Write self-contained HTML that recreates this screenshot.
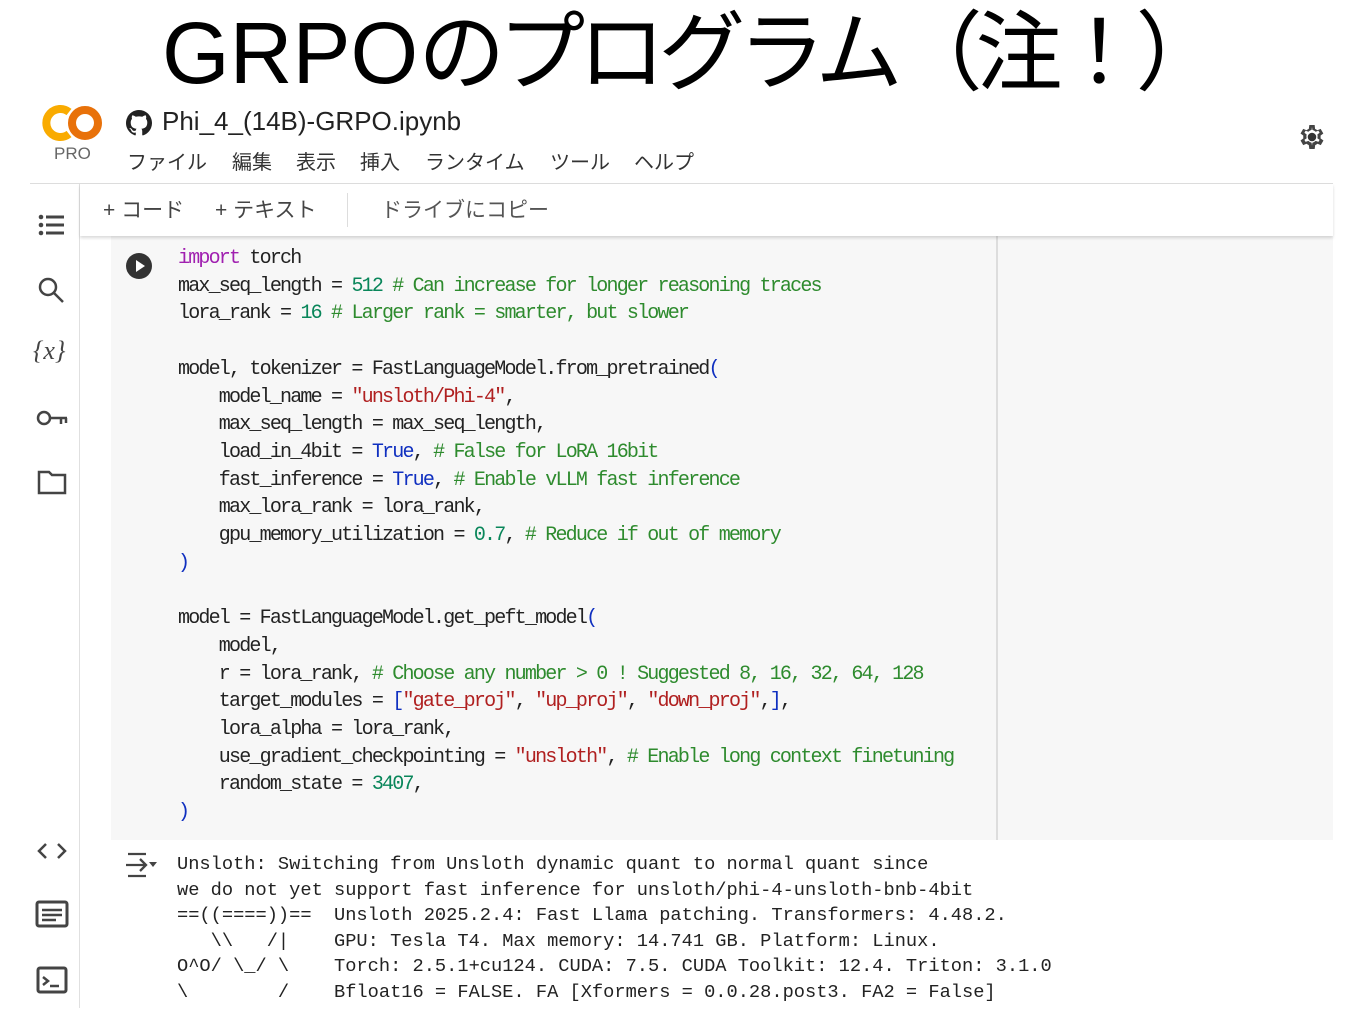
<!DOCTYPE html>
<html><head><meta charset="utf-8"><style>
*{margin:0;padding:0;box-sizing:border-box}
body{width:1371px;height:1025px;background:#fff;position:relative;overflow:hidden;font-family:"Liberation Sans","Noto Sans CJK JP",sans-serif;color:#222}
.abs{position:absolute}
.title{left:162px;top:4px;font-size:87px;line-height:100px;white-space:nowrap;color:#000}
.title span{letter-spacing:-7px}
.code{left:178px;top:245px;font-family:"Liberation Mono",monospace;font-size:20px;letter-spacing:-1.8px;line-height:27.7px;white-space:pre;color:#222}
.k{color:#a020b0}.n{color:#09865a}.c{color:#2e8b2e}.s{color:#b02020}.b{color:#1030c0}
.out{left:177px;top:852px;font-family:"Liberation Mono",monospace;font-size:18.7px;line-height:25.5px;white-space:pre;color:#222}
.menu{top:146px;font-size:20px;color:#333}
.ic{stroke:#444;fill:none;stroke-width:2.5}
</style></head><body>
<div class="abs title">GRPO<span>のプログラム（注！）</span></div>

<svg class="abs" style="left:42px;top:104px" width="62" height="38" viewBox="0 0 62 38">
<path d="M27 8 A14 14 0 1 0 27 30" stroke="#f9ab00" stroke-width="8" fill="none"/>
<circle cx="43" cy="19" r="13" stroke="#e8710a" stroke-width="8" fill="none"/>
</svg>
<div class="abs" style="left:54px;top:144px;font-size:17px;color:#666">PRO</div>

<svg class="abs" style="left:126px;top:110px" width="26" height="26" viewBox="0 0 16 16"><path fill="#222" d="M8 0C3.58 0 0 3.580 0 8c0 3.54 2.29 6.53 5.47 7.59.4.07.55-.17.55-.38v-1.330c-2.23.48-2.7-1.070-2.7-1.07-.36-.92-.89-1.17-.89-1.17-.73-.5.05-.49.05-.49.8.06 1.23.83 1.23.83.72 1.22 1.870.87 2.33.66.07-.52.28-.87.5-1.07-1.78-.2-3.64-.89-3.640-3.95 0-.87.31-1.59.82-2.15-.08-.2-.36-1.02.08-2.12 0 0 .67-.21 2.2.82a7.6 7.6 0 0 1 4 0c1.53-1.04 2.2-.82 2.2-.82.44 1.1.16 1.92.08 2.12.51.56.82 1.27.82 2.15 0 3.07-1.87 3.75-3.65 3.95.29.25.54.73.54 1.48v2.2c0 .21.15.46.55.38A8 8 0 0 0 16 8c0-4.42-3.58-8-8-8z"/></svg>
<div class="abs" style="left:162px;top:106px;font-size:26px;color:#222">Phi_4_(14B)-GRPO.ipynb</div>
<div class="abs menu" style="left:127px">ファイル</div>
<div class="abs menu" style="left:232px">編集</div>
<div class="abs menu" style="left:296px">表示</div>
<div class="abs menu" style="left:360px">挿入</div>
<div class="abs menu" style="left:425px">ランタイム</div>
<div class="abs menu" style="left:550px">ツール</div>
<div class="abs menu" style="left:634px">ヘルプ</div>

<svg class="abs" style="left:1296px;top:121px" width="32" height="32" viewBox="0 0 24 24"><path fill="#444" d="M19.4 13a7.5 7.5 0 0 0 0-2l2.1-1.6-2-3.5-2.5 1a7 7 0 0 0-1.7-1L15 3h-4l-.4 2.9a7 7 0 0 0-1.7 1l-2.5-1-2 3.5L6.5 11a7.5 7.5 0 0 0 0 2l-2.1 1.6 2 3.5 2.5-1a7 7 0 0 0 1.7 1L11 21h4l.4-2.9a7 7 0 0 0 1.7-1l2.5 1 2-3.5zM13 18.5h-0l-.3-2.2a5 5 0 0 1-2.4-1.4l-2.1.8-.9-1.5 1.7-1.3a5 5 0 0 1 0-2.8L7.3 8.8l.9-1.5 2.1.8a5 5 0 0 1 2.4-1.4L13 4.5h0l.3 2.2a5 5 0 0 1 2.4 1.4l2.1-.8.9 1.5-1.7 1.3a5 5 0 0 1 0 2.8l1.7 1.3-.9 1.5-2.1-.8a5 5 0 0 1-2.4 1.4z" transform="translate(-1 0)"/><circle cx="12" cy="12" r="3.2" fill="#333"/></svg>

<div class="abs" style="left:30px;top:183px;width:1303px;height:1px;background:#ddd"></div>
<div class="abs" style="left:79px;top:184px;width:1px;height:824px;background:#e0e0e0"></div>

<div class="abs" style="left:80px;top:184px;width:1253px;height:52px;background:#fff;box-shadow:0 2px 3px rgba(0,0,0,.15);z-index:2"></div>
<div class="abs" style="left:103px;top:194px;font-size:21px;color:#444;z-index:3">+ コード</div>
<div class="abs" style="left:215px;top:194px;font-size:21px;color:#444;z-index:3">+ テキスト</div>
<div class="abs" style="left:347px;top:193px;width:1px;height:34px;background:#ddd;z-index:3"></div>
<div class="abs" style="left:381px;top:194px;font-size:21px;color:#555;z-index:3">ドライブにコピー</div>

<svg class="abs" style="left:36px;top:210px" width="30" height="30" viewBox="0 0 30 30"><g fill="#444"><circle cx="5" cy="7" r="2.3"/><circle cx="5" cy="15" r="2.3"/><circle cx="5" cy="23" r="2.3"/><rect x="10" y="5.5" width="18" height="3"/><rect x="10" y="13.5" width="18" height="3"/><rect x="10" y="21.5" width="18" height="3"/></g></svg>
<svg class="abs" style="left:36px;top:275px" width="30" height="30" viewBox="0 0 30 30"><circle class="ic" cx="12" cy="12" r="8" stroke-width="3"/><path class="ic" d="M18 18l9 9" stroke-width="3.5"/></svg>
<div class="abs" style="left:33px;top:336px;font-size:26px;font-family:'Liberation Serif',serif;font-style:italic;color:#444">{<i>x</i>}</div>
<svg class="abs" style="left:35px;top:405px" width="34" height="26" viewBox="0 0 34 26"><circle class="ic" cx="9" cy="13" r="6" stroke-width="3"/><path class="ic" d="M15 13h17M26 13v6M31 13v5" stroke-width="3"/></svg>
<svg class="abs" style="left:36px;top:468px" width="32" height="28" viewBox="0 0 32 28"><path class="ic" d="M3 4h10l3 3h13v18H3z"/></svg>
<svg class="abs" style="left:36px;top:840px" width="32" height="22" viewBox="0 0 32 22"><path d="M10 4l-7 7 7 7M22 4l7 7-7 7" stroke="#444" stroke-width="2.5" fill="none"/></svg>
<svg class="abs" style="left:35px;top:900px" width="34" height="28" viewBox="0 0 34 28"><rect x="2" y="2" width="30" height="24" rx="2" fill="none" stroke="#444" stroke-width="3"/><path d="M7 10h20M7 15h20M7 20h14" stroke="#444" stroke-width="2.5"/></svg>
<svg class="abs" style="left:36px;top:966px" width="32" height="28" viewBox="0 0 32 28"><rect x="2" y="2" width="28" height="24" rx="2" fill="none" stroke="#444" stroke-width="3"/><path d="M7 11l5 4-5 4M14 20h9" stroke="#444" stroke-width="2.5" fill="none"/></svg>

<div class="abs" style="left:111px;top:236px;width:1222px;height:604px;background:#f7f7f7"></div>
<div class="abs" style="left:996px;top:236px;width:2px;height:604px;background:#ddd"></div>
<svg class="abs" style="left:125px;top:252px" width="28" height="28" viewBox="0 0 28 28"><circle cx="14" cy="14" r="13" fill="#333"/><path d="M11 8l9 6-9 6z" fill="#fff"/></svg>
<div class="abs code"><span class="k">import</span> torch
max_seq_length = <span class="n">512</span> <span class="c"># Can increase for longer reasoning traces</span>
lora_rank = <span class="n">16</span> <span class="c"># Larger rank = smarter, but slower</span>

model, tokenizer = FastLanguageModel.from_pretrained<span class="b">(</span>
    model_name = <span class="s">"unsloth/Phi-4"</span>,
    max_seq_length = max_seq_length,
    load_in_4bit = <span class="b">True</span>, <span class="c"># False for LoRA 16bit</span>
    fast_inference = <span class="b">True</span>, <span class="c"># Enable vLLM fast inference</span>
    max_lora_rank = lora_rank,
    gpu_memory_utilization = <span class="n">0.7</span>, <span class="c"># Reduce if out of memory</span>
<span class="b">)</span>

model = FastLanguageModel.get_peft_model<span class="b">(</span>
    model,
    r = lora_rank, <span class="c"># Choose any number &gt; 0 ! Suggested 8, 16, 32, 64, 128</span>
    target_modules = <span class="b">[</span><span class="s">"gate_proj"</span>, <span class="s">"up_proj"</span>, <span class="s">"down_proj"</span>,<span class="b">]</span>,
    lora_alpha = lora_rank,
    use_gradient_checkpointing = <span class="s">"unsloth"</span>, <span class="c"># Enable long context finetuning</span>
    random_state = <span class="n">3407</span>,
<span class="b">)</span></div>

<svg class="abs" style="left:124px;top:851px" width="34" height="28" viewBox="0 0 34 28"><path d="M4 3h18M4 25h18M2 14h20M16 8l6 6-6 6" stroke="#444" stroke-width="2.3" fill="none"/><path d="M25 11h8l-4 5z" fill="#444"/></svg>
<div class="abs out">Unsloth: Switching from Unsloth dynamic quant to normal quant since
we do not yet support fast inference for unsloth/phi-4-unsloth-bnb-4bit
==((====))==  Unsloth 2025.2.4: Fast Llama patching. Transformers: 4.48.2.
   \\   /|    GPU: Tesla T4. Max memory: 14.741 GB. Platform: Linux.
O^O/ \_/ \    Torch: 2.5.1+cu124. CUDA: 7.5. CUDA Toolkit: 12.4. Triton: 3.1.0
\        /    Bfloat16 = FALSE. FA [Xformers = 0.0.28.post3. FA2 = False]</div>
</body></html>
